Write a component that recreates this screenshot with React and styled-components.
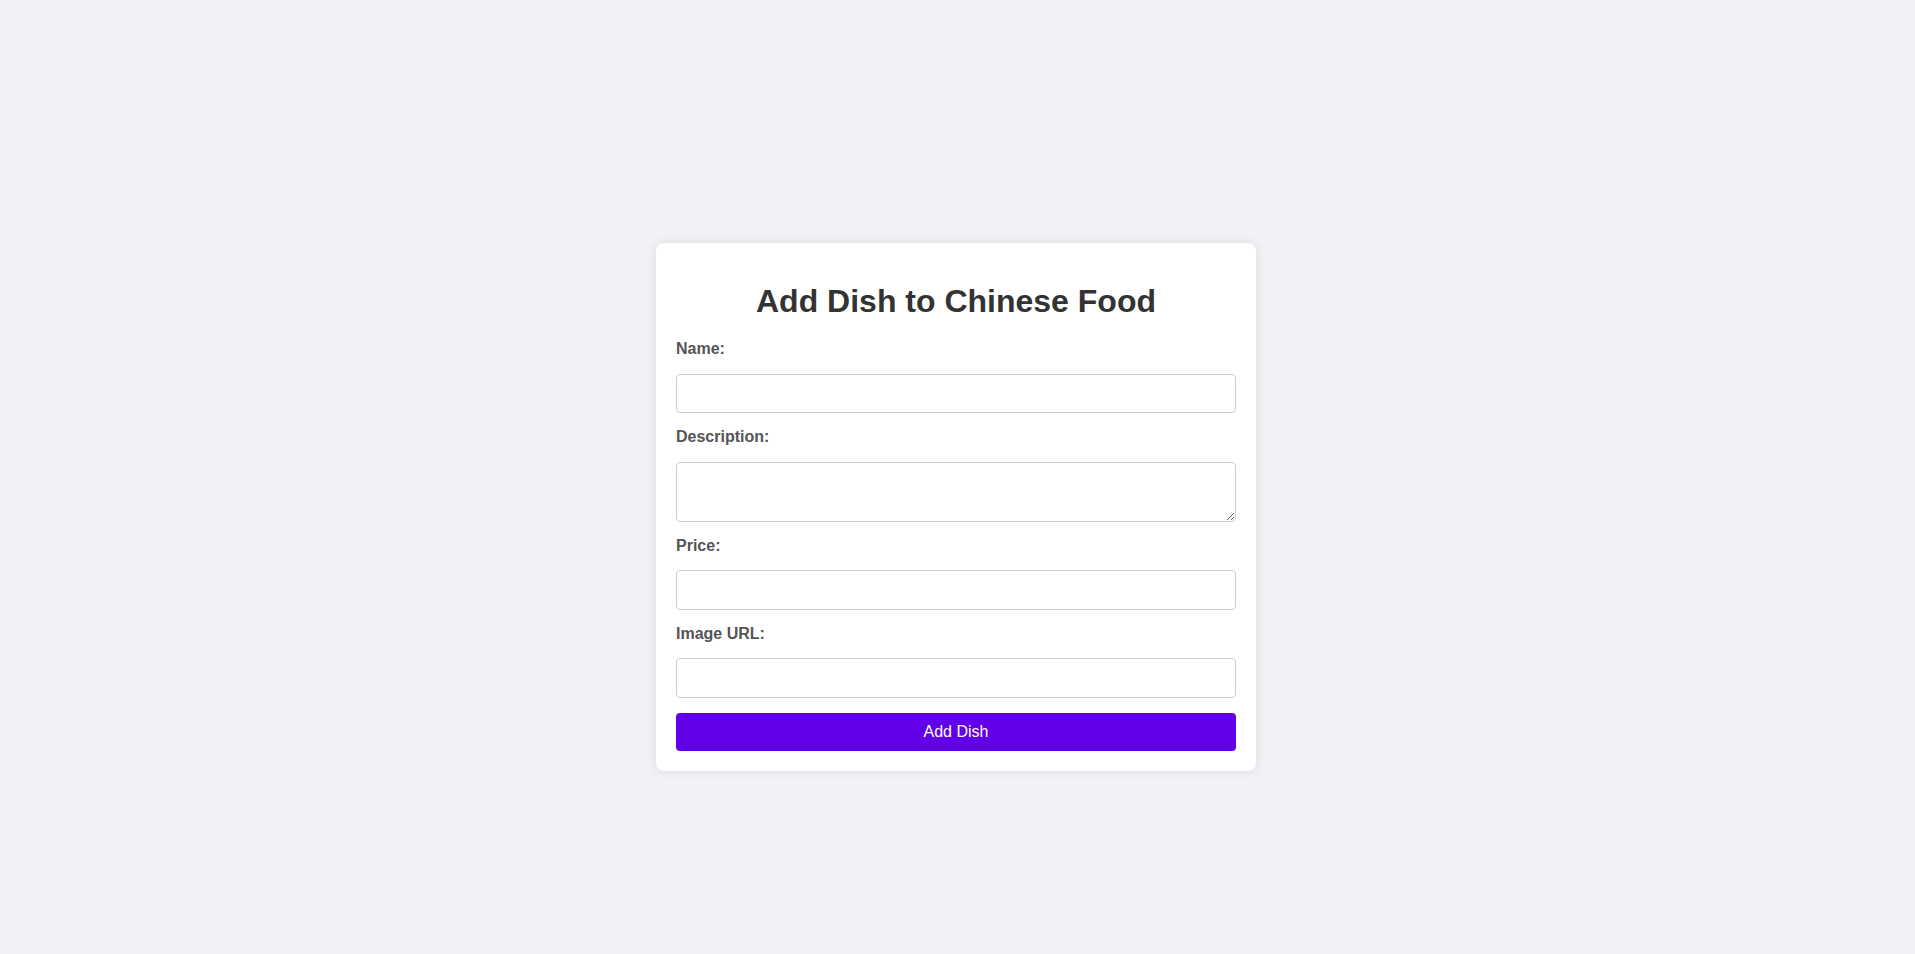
import React from "react";
import styled, { createGlobalStyle } from "styled-components";

const GlobalStyle = createGlobalStyle`
  * { box-sizing: border-box; }
  html, body {
    margin: 0;
    padding: 0;
    background: #f0f2f5;
    font-family: "Liberation Sans", Arial, sans-serif;
  }
`;

const Page = styled.div`
  min-height: 100vh;
  padding: 60px 3px 0 0;
  display: flex;
  align-items: center;
  justify-content: center;
  background: #f0f2f5;
`;

const Card = styled.div`
  width: 600px;
  background: #ffffff;
  border-radius: 8px;
  box-shadow: 0 0 10px rgba(0, 0, 0, 0.1);
  padding: 20px;
`;

const Title = styled.h1`
  margin: 20px 0;
  line-height: 37px;
  text-align: center;
  font-size: 32px;
  font-weight: bold;
  color: #333333;
`;

const Form = styled.form`
  display: flex;
  flex-direction: column;
  gap: 15px;
`;

const Label = styled.label`
  display: block;
  font-size: 16px;
  line-height: 18.5px;
  font-weight: bold;
  color: #555555;
`;

const fieldStyles = `
  display: block;
  width: 100%;
  padding: 10px;
  border: 1px solid #cccccc;
  border-radius: 4px;
  font-size: 16px;
  font-family: "Liberation Sans", Arial, sans-serif;
  background: #ffffff;
  margin: 0;
`;

const Input = styled.input`
  ${fieldStyles}
  height: 39.5px;
`;

const TextArea = styled.textarea`
  ${fieldStyles}
  height: 60px;
  resize: vertical;
`;

const SubmitButton = styled.button`
  display: block;
  width: 100%;
  height: 38px;
  padding: 10px;
  border: none;
  border-radius: 4px;
  background: #6200ea;
  color: #ffffff;
  font-size: 16px;
  font-family: "Liberation Sans", Arial, sans-serif;
  cursor: pointer;
`;

const fields = [
  { id: "name", label: "Name:", type: "text" },
  { id: "description", label: "Description:", multiline: true },
  { id: "price", label: "Price:", type: "number" },
  { id: "image", label: "Image URL:", type: "text" },
];

export default function App() {
  return (
    <>
      <GlobalStyle />
      <Page>
        <Card>
          <Title>Add Dish to Chinese Food</Title>
          <Form onSubmit={(e) => e.preventDefault()}>
            {fields.map((f) => (
              <React.Fragment key={f.id}>
                <Label htmlFor={f.id}>{f.label}</Label>
                {f.multiline ? (
                  <TextArea id={f.id} />
                ) : (
                  <Input id={f.id} type={f.type} />
                )}
              </React.Fragment>
            ))}
            <SubmitButton type="submit">Add Dish</SubmitButton>
          </Form>
        </Card>
      </Page>
    </>
  );
}
